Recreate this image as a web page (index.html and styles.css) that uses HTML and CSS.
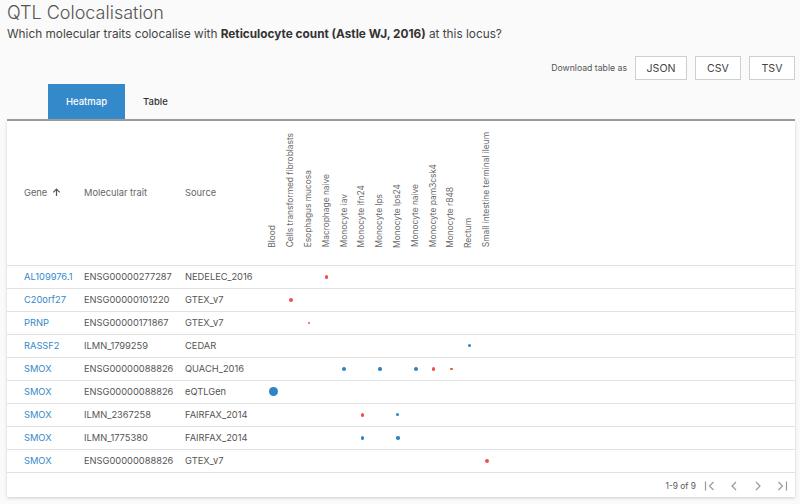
FILE: index.html
```html
<!DOCTYPE html>
<html lang="en">
<head>
<meta charset="utf-8">
<title>QTL Colocalisation</title>
<link rel="stylesheet" href="styles.css">
</head>
<body>
<div class="page">
  <h1 class="title">QTL Colocalisation</h1>
  <p class="subtitle">Which molecular traits colocalise with <b>Reticulocyte count (Astle WJ, 2016)</b> at this locus?</p>
  <div class="download">
    <span class="dl-label">Download table as</span>
    <button class="btn btn-json">JSON</button>
    <button class="btn btn-csv">CSV</button>
    <button class="btn btn-tsv">TSV</button>
  </div>
  <div class="tabs">
    <div class="tab active">Heatmap</div>
    <div class="tab">Table</div>
  </div>
  <div class="panel">
    <table class="grid">
      <colgroup>
        <col class="c-gene"><col class="c-trait"><col class="c-source">
        <col class="c-t"><col class="c-t"><col class="c-t"><col class="c-t"><col class="c-t"><col class="c-t"><col class="c-t"><col class="c-t"><col class="c-t"><col class="c-t"><col class="c-t"><col class="c-t"><col class="c-t">
        <col class="c-fill">
      </colgroup>
      <thead>
        <tr>
          <th class="h-gene">Gene <svg class="sort" width="9" height="9" viewBox="0 0 9 9"><path d="M4.5 8V1.2M1.3 4.3L4.5 1.1L7.7 4.3" fill="none" stroke="#555" stroke-width="1.2"/></svg></th>
          <th class="h-text">Molecular trait</th>
          <th class="h-text">Source</th>
          <th class="h-rot"><div class="rot">Blood</div></th>
          <th class="h-rot"><div class="rot">Cells transformed fibroblasts</div></th>
          <th class="h-rot"><div class="rot">Esophagus mucosa</div></th>
          <th class="h-rot"><div class="rot">Macrophage naive</div></th>
          <th class="h-rot"><div class="rot">Monocyte iav</div></th>
          <th class="h-rot"><div class="rot">Monocyte ifn24</div></th>
          <th class="h-rot"><div class="rot">Monocyte lps</div></th>
          <th class="h-rot"><div class="rot">Monocyte lps24</div></th>
          <th class="h-rot"><div class="rot">Monocyte naive</div></th>
          <th class="h-rot"><div class="rot">Monocyte pam3csk4</div></th>
          <th class="h-rot"><div class="rot">Monocyte r848</div></th>
          <th class="h-rot"><div class="rot">Rectum</div></th>
          <th class="h-rot"><div class="rot">Small intestine terminal ileum</div></th>
          <th></th>
        </tr>
      </thead>
      <tbody>
        <tr>
          <td class="gene"><a href="#">AL109976.1</a></td><td>ENSG00000277287</td><td>NEDELEC_2016</td>
          <td></td><td></td><td></td><td class="dc"><span class="dot red" style="width:3.5px;height:3.5px"></span></td><td></td><td></td><td></td><td></td><td></td><td></td><td></td><td></td><td></td><td></td>
        </tr>
        <tr>
          <td class="gene"><a href="#">C20orf27</a></td><td>ENSG00000101220</td><td>GTEX_v7</td>
          <td></td><td class="dc"><span class="dot red" style="width:4.5px;height:4.5px"></span></td><td></td><td></td><td></td><td></td><td></td><td></td><td></td><td></td><td></td><td></td><td></td><td></td>
        </tr>
        <tr>
          <td class="gene"><a href="#">PRNP</a></td><td>ENSG00000171867</td><td>GTEX_v7</td>
          <td></td><td></td><td class="dc"><span class="dot red" style="width:2.2px;height:2.2px"></span></td><td></td><td></td><td></td><td></td><td></td><td></td><td></td><td></td><td></td><td></td><td></td>
        </tr>
        <tr>
          <td class="gene"><a href="#">RASSF2</a></td><td>ILMN_1799259</td><td>CEDAR</td>
          <td></td><td></td><td></td><td></td><td></td><td></td><td></td><td></td><td></td><td></td><td></td><td class="dc"><span class="dot blue" style="width:3px;height:3px"></span></td><td></td><td></td>
        </tr>
        <tr>
          <td class="gene"><a href="#">SMOX</a></td><td>ENSG00000088826</td><td>QUACH_2016</td>
          <td></td><td></td><td></td><td></td><td class="dc"><span class="dot blue" style="width:4px;height:4px"></span></td><td></td><td class="dc"><span class="dot blue" style="width:3.5px;height:3.5px"></span></td><td></td><td class="dc"><span class="dot blue" style="width:4px;height:4px"></span></td><td class="dc"><span class="dot red" style="width:3.5px;height:3.5px"></span></td><td class="dc"><span class="dot red" style="width:2.8px;height:2.8px"></span></td><td></td><td></td><td></td>
        </tr>
        <tr>
          <td class="gene"><a href="#">SMOX</a></td><td>ENSG00000088826</td><td>eQTLGen</td>
          <td class="dc"><span class="dot blue" style="width:9px;height:9px"></span></td><td></td><td></td><td></td><td></td><td></td><td></td><td></td><td></td><td></td><td></td><td></td><td></td><td></td>
        </tr>
        <tr>
          <td class="gene"><a href="#">SMOX</a></td><td>ILMN_2367258</td><td>FAIRFAX_2014</td>
          <td></td><td></td><td></td><td></td><td></td><td class="dc"><span class="dot red" style="width:3.5px;height:3.5px"></span></td><td></td><td class="dc"><span class="dot blue" style="width:3px;height:3px"></span></td><td></td><td></td><td></td><td></td><td></td><td></td>
        </tr>
        <tr>
          <td class="gene"><a href="#">SMOX</a></td><td>ILMN_1775380</td><td>FAIRFAX_2014</td>
          <td></td><td></td><td></td><td></td><td></td><td class="dc"><span class="dot blue" style="width:3.2px;height:3.2px"></span></td><td></td><td class="dc"><span class="dot blue" style="width:3.5px;height:3.5px"></span></td><td></td><td></td><td></td><td></td><td></td><td></td>
        </tr>
        <tr>
          <td class="gene"><a href="#">SMOX</a></td><td>ENSG00000088826</td><td>GTEX_v7</td>
          <td></td><td></td><td></td><td></td><td></td><td></td><td></td><td></td><td></td><td></td><td></td><td></td><td class="dc"><span class="dot red" style="width:4.5px;height:4.5px"></span></td><td></td>
        </tr>
      </tbody>
    </table>
    <div class="pager">
      <span class="count">1-9 of 9</span>
      <svg class="pg" width="12" height="12" viewBox="0 0 12 12"><path d="M1.5 1.5V10.5M9.5 2L5.5 6L9.5 10" fill="none" stroke="#9a9a9a" stroke-width="1.2"/></svg>
      <svg class="pg" width="12" height="12" viewBox="0 0 12 12"><path d="M8 2L4 6L8 10" fill="none" stroke="#9a9a9a" stroke-width="1.2"/></svg>
      <svg class="pg" width="12" height="12" viewBox="0 0 12 12"><path d="M4 2L8 6L4 10" fill="none" stroke="#9a9a9a" stroke-width="1.2"/></svg>
      <svg class="pg" width="12" height="12" viewBox="0 0 12 12"><path d="M2.5 2L6.5 6L2.5 10M10.5 1.5V10.5" fill="none" stroke="#9a9a9a" stroke-width="1.2"/></svg>
    </div>
  </div>
</div>
</body>
</html>
```

FILE: styles.css
```css
* { box-sizing: border-box; }
html, body { margin: 0; padding: 0; }
body {
  background: #fafafa;
  font-family: Inter, "Noto Sans", sans-serif;
  color: #555;
  width: 800px;
  height: 504px;
  overflow: hidden;
}
.page { padding: 0 5px 0 7px; }
.title {
  margin: 0;
  padding-top: 1px;
  font-size: 18px;
  line-height: 24px;
  font-weight: 300;
  color: #555;
}
.subtitle {
  margin: 0;
  padding-top: 1px;
  font-size: 11.8px;
  line-height: 16px;
  color: #444;
}
.subtitle b { font-weight: 700; color: #333; }
.download {
  display: flex;
  justify-content: flex-end;
  align-items: center;
  gap: 8px;
  margin-top: 14px;
  height: 24px;
}
.dl-label { font-size: 8.7px; color: #555; }
.btn {
  height: 24px;
  background: #fff;
  border: 1px solid #cfcfcf;
  font-family: Inter, "Noto Sans", sans-serif;
  font-size: 10.6px;
  color: #444;
  padding: 0;
  margin: 0;
}
.btn-json { width: 52px; }
.btn-csv { width: 46px; }
.btn-tsv { width: 46px; }
.tabs {
  display: flex;
  margin-top: 4px;
  padding-left: 41px;
  border-bottom: 2px solid #9e9e9e;
}
.tab {
  height: 35px;
  line-height: 35px;
  font-size: 9.5px;
  font-weight: 500;
  color: #333;
  padding: 0 18px;
}
.tab.active { background: #3489ca; color: #fff; width: 77px; text-align: center; padding: 0; }
.panel {
  background: #fff;
  box-shadow: 0 1px 3px rgba(0,0,0,0.18);
  height: 376px;
}
.grid {
  width: 100%;
  border-collapse: collapse;
  table-layout: fixed;
  font-size: 9.3px;
}
.c-gene { width: 77px; }
.c-trait { width: 101px; }
.c-source { width: 79.4px; }
.c-t { width: 17.8px; }
.grid th {
  font-weight: 400;
  color: #666;
  text-align: left;
  padding: 0;
  height: 144px;
  border-bottom: 1px solid #e2e2e2;
}
.grid th.h-gene { padding-left: 17px; }
.sort { vertical-align: -1px; margin-left: 2px; }
.grid th.h-rot { vertical-align: bottom; padding-bottom: 17px; }
.rot {
  writing-mode: vertical-rl;
  transform: rotate(180deg);
  white-space: nowrap;
  font-size: 8.4px;
  line-height: 17.8px;
  color: #666;
}
.grid td {
  height: 23px;
  padding: 0;
  border-bottom: 1px solid #e2e2e2;
  color: #555;
  white-space: nowrap;
  line-height: 22px;
}
.grid td.gene { padding-left: 17px; }
.gene a { color: #3489ca; text-decoration: none; }
.dc { text-align: center; }
.dot {
  display: inline-block;
  border-radius: 50%;
  vertical-align: middle;
}
.dot.red { background: #ef5148; }
.dot.blue { background: #2f84c6; }
.pager {
  display: flex;
  justify-content: flex-end;
  align-items: center;
  height: 26px;
  padding-right: 7px;
  gap: 12px;
  font-size: 8.4px;
}
.count { margin-right: -4px; color: #555; }
.pg { display: block; }
```
